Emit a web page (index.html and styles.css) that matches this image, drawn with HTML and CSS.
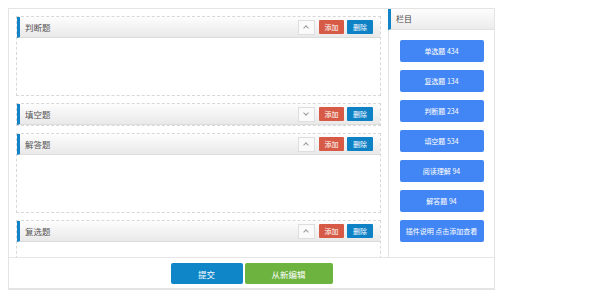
FILE: index.html
```html
<!DOCTYPE html>
<html lang="zh-CN">
<head>
    <meta charset="UTF-8">
    <title>试卷编辑</title>
    <link rel="stylesheet" href="styles.css">
</head>
<body>
    <div class="editor">
        <div class="editor-main">
            <!-- question groups -->
            <div class="groups">
                <div class="group">
                    <div class="group-head">
                        <span class="group-title">判断题</span>
                        <span class="toggle up"></span>
                        <button class="sm-btn add">添加</button>
                        <button class="sm-btn del">删除</button>
                    </div>
                    <div class="group-body"></div>
                </div>

                <div class="group">
                    <div class="group-head">
                        <span class="group-title">填空题</span>
                        <span class="toggle down"></span>
                        <button class="sm-btn add">添加</button>
                        <button class="sm-btn del">删除</button>
                    </div>
                </div>

                <div class="group">
                    <div class="group-head">
                        <span class="group-title">解答题</span>
                        <span class="toggle up"></span>
                        <button class="sm-btn add">添加</button>
                        <button class="sm-btn del">删除</button>
                    </div>
                    <div class="group-body"></div>
                </div>

                <div class="group">
                    <div class="group-head">
                        <span class="group-title">复选题</span>
                        <span class="toggle up"></span>
                        <button class="sm-btn add">添加</button>
                        <button class="sm-btn del">删除</button>
                    </div>
                    <div class="group-body"></div>
                </div>
            </div>

            <!-- column list -->
            <div class="sidebar">
                <div class="side-head">栏目</div>
                <div class="side-list">
                    <button class="side-btn">单选题 434</button>
                    <button class="side-btn">复选题 134</button>
                    <button class="side-btn">判断题 234</button>
                    <button class="side-btn">填空题 534</button>
                    <button class="side-btn">阅读理解 94</button>
                    <button class="side-btn">解答题 94</button>
                    <button class="side-btn">插件说明 点击添加查看</button>
                </div>
            </div>
        </div>

        <div class="editor-foot">
            <button class="foot-btn submit">提交</button>
            <button class="foot-btn redo">从新编辑</button>
        </div>
    </div>
</body>
</html>
```

FILE: styles.css
```css
body {
    margin: 8px;
    font-family: "Noto Sans CJK SC", "Liberation Sans", sans-serif;
    background: #fff;
}

button {
    font-family: inherit;
    border: none;
    cursor: pointer;
    padding: 0;
}

.editor {
    width: 485px;
    border: 1px solid #e4e4e4;
    border-bottom-width: 2px;
}

.editor-main {
    display: flex;
    height: 248px;
}

.groups {
    flex: 1;
    padding: 7px 7px 0 7px;
    overflow: hidden;
    display: flex;
    flex-direction: column;
    gap: 7px;
}

.group {
    border: 1px dashed #d8d8d8;
    flex-shrink: 0;
}

.group-head {
    display: flex;
    align-items: center;
    height: 20px;
    border-left: 3px solid #1283c6;
    border-bottom: 1px solid #dcdcdc;
    background: linear-gradient(#fdfdfd, #e9e9e9);
    padding: 0 7px 0 5px;
}

.group-title {
    flex: 1;
    font-size: 8.5px;
    color: #555;
}

.toggle {
    width: 15px;
    height: 13px;
    border: 1px solid #dedede;
    background: #fafafa;
    margin-right: 4px;
    position: relative;
}

.toggle::after {
    content: "";
    position: absolute;
    left: 5px;
    width: 3px;
    height: 3px;
    border-left: 1px solid #999;
    border-top: 1px solid #999;
}

.toggle.up::after { top: 5px; transform: rotate(45deg); }
.toggle.down::after { top: 3px; transform: rotate(225deg); }

.sm-btn {
    height: 14px;
    width: 25px;
    font-size: 7px;
    color: #fff;
    border-radius: 1px;
}

.sm-btn.add { background: #d65a45; margin-right: 3px; }
.sm-btn.del { background: #0f82c6; width: 26px; }

.group-body {
    height: 57px;
}

.sidebar {
    width: 105px;
    border-left: 1px solid #e2e2e2;
}

.side-head {
    height: 20px;
    line-height: 20px;
    border-left: 3px solid #1283c6;
    border-bottom: 1px solid #e2e2e2;
    background: linear-gradient(#fdfdfd, #ececec);
    margin-left: -1px;
    padding-left: 5px;
    font-size: 8px;
    color: #444;
}

.side-list {
    display: flex;
    flex-direction: column;
    align-items: center;
    gap: 8px;
    padding-top: 10px;
}

.side-btn {
    width: 84px;
    height: 22px;
    background: #4285f4;
    color: #fff;
    font-size: 7px;
    border-radius: 2px;
}

.editor-foot {
    border-top: 1px solid #e6e6e6;
    height: 31px;
    display: flex;
    justify-content: center;
    gap: 2px;
    padding-top: 5px;
    box-sizing: border-box;
}

.foot-btn {
    height: 21px;
    color: #fff;
    font-size: 8.5px;
    border-radius: 2px;
}

.foot-btn.submit { width: 72px; background: #0e86c8; }
.foot-btn.redo { width: 88px; background: #6db33f; }
```
